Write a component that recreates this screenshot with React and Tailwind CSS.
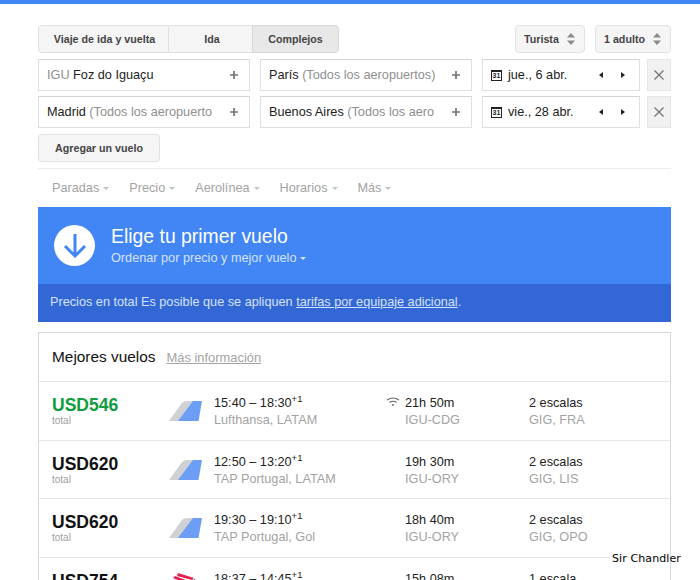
const flights = [
  { price: 'USD546', best: true, times: '15:40 – 18:30', plus: '+1', air: 'Lufthansa, LATAM', wifi: true, dur: '21h 50m', route: 'IGU-CDG', stops: '2 escalas', via: 'GIG, FRA' },
  { price: 'USD620', times: '12:50 – 13:20', plus: '+1', air: 'TAP Portugal, LATAM', dur: '19h 30m', route: 'IGU-ORY', stops: '2 escalas', via: 'GIG, LIS' },
  { price: 'USD620', times: '19:30 – 19:10', plus: '+1', air: 'TAP Portugal, Gol', dur: '18h 40m', route: 'IGU-ORY', stops: '2 escalas', via: 'GIG, OPO' },
  { price: 'USD754', times: '18:37 – 14:45', plus: '+1', air: 'LATAM', dur: '15h 08m', route: 'IGU-CDG', stops: '1 escala', via: 'GRU', latam: true },
];

const TailIcon = () => (
  <svg width="33" height="20" viewBox="0 0 33 20">
    <path d="M0 20 L13 2 Q15 0 18 0 L24 0 L13 20 Z" fill="#cfd1d4" />
    <path d="M9 20 L24 0 L33 0 L29.5 20 Z" fill="#6d9ef5" />
  </svg>
);

const LatamIcon = () => (
  <svg width="23" height="14" viewBox="0 0 23 14" className="ml-[4px] -mt-[4px]">
    <path d="M5 0 L21 5 L19 7 L4 3 Z" fill="#e8214f" />
    <path d="M0 5 L2 3 L18 9 L16 12 Z" fill="#e8214f" />
    <path d="M12 12 L22 6 L22 14 L12 14 Z" fill="#2a1f7e" />
  </svg>
);

const Wifi = () => (
  <svg width="14" height="10" viewBox="0 0 14 10" fill="none" stroke="#666" strokeWidth="1.1">
    <path d="M1 3 Q7 -1 13 3" />
    <path d="M3.5 5.5 Q7 3 10.5 5.5" />
    <circle cx="7" cy="8" r="0.9" fill="#666" stroke="none" />
  </svg>
);

const Caret = ({ color = 'border-t-[#c4c4c4]' }) => (
  <span className={`inline-block w-0 h-0 border-x-[3px] border-x-transparent border-t-[3px] ml-[4px] align-middle ${color}`} />
);

const Plus = () => (
  <svg width="8" height="8" viewBox="0 0 8 8" className="shrink-0">
    <path d="M4 0 V8 M0 4 H8" stroke="#757575" strokeWidth="1.7" />
  </svg>
);

const Updown = () => (
  <svg width="8" height="12" viewBox="0 0 8 12" fill="#8a8a8a">
    <path d="M4 0 L8 4.5 H0 Z" />
    <path d="M4 12 L8 7.5 H0 Z" />
  </svg>
);

const Select = ({ label, width }) => (
  <div className={`${width} h-[28px] flex items-center justify-between pl-[8px] pr-[9px] bg-[#f5f5f5] border border-[#e2e2e2] rounded-sm text-[10.7px] font-bold text-[#444]`}>
    {label}
    <Updown />
  </div>
);

const Field = ({ children, width }) => (
  <div className={`${width} h-[32px] flex items-center justify-between pl-[8px] pr-[11px] bg-white border border-[#e0e0e0] border-t-[#d4d4d4] text-[12.7px] text-[#222]`}>
    <span className="whitespace-nowrap overflow-hidden w-[170px] pt-[1px]">{children}</span>
    <Plus />
  </div>
);

const DateField = ({ label }) => (
  <div className="w-[158px] h-[32px] flex items-center pl-[8px] bg-white border border-[#e0e0e0] border-t-[#d4d4d4] text-[12.7px] text-[#222]">
    <span className="w-[11px] h-[11px] border border-[#222] border-t-2 text-[7px] leading-[8px] font-bold text-center mr-[6px] shrink-0">31</span>
    <span className="w-[91px] whitespace-nowrap pt-[1px]">{label}</span>
    <span className="w-0 h-0 border-y-[3.5px] border-y-transparent border-r-[4px] border-r-[#222]" />
    <span className="w-0 h-0 border-y-[3.5px] border-y-transparent border-l-[4px] border-l-[#222] ml-[18px]" />
  </div>
);

const CloseBox = () => (
  <div className="w-[24px] h-[32px] flex items-center justify-center bg-[#f1f1f1] border border-[#e6e6e6]">
    <svg width="10" height="10" viewBox="0 0 10 10">
      <path d="M0.5 0.5 L9.5 9.5 M9.5 0.5 L0.5 9.5" stroke="#757575" strokeWidth="1.3" />
    </svg>
  </div>
);

const Gray = ({ children }) => <span className="text-[#8f8f8f]">{children}</span>;

const FlightRow = ({ f }) => (
  <div className="h-[58.5px] flex pt-[13px] border-t border-[#e8e8e8] text-[12.7px] leading-[17px] text-[#222]">
    <div className="w-[130px] pl-[13px]">
      <div className={`text-[17.5px] leading-[20px] font-bold ${f.best ? 'text-[#109d3e]' : 'text-[#111]'}`}>{f.price}</div>
      <div className="text-[10px] leading-[11px] text-[#9e9e9e]">total</div>
    </div>
    <div className="w-[45px] pt-[6px]">{f.latam ? <LatamIcon /> : <TailIcon />}</div>
    <div className="w-[191px]">
      <div className="whitespace-nowrap">
        {f.times}
        <sup className="text-[9.5px] leading-[0]">{f.plus}</sup>
      </div>
      <div className="text-[#a3a3a3]">{f.air}</div>
    </div>
    <div className="w-[124px] relative">
      {f.wifi && (
        <span className="absolute left-[-19px] top-[2px]">
          <Wifi />
        </span>
      )}
      <div>{f.dur}</div>
      <div className="text-[#a3a3a3]">{f.route}</div>
    </div>
    <div>
      <div>{f.stops}</div>
      <div className="text-[#a3a3a3]">{f.via}</div>
    </div>
  </div>
);

const App = () => {
  return (
    <div className="relative w-[700px] h-[580px] overflow-hidden bg-white font-['Liberation_Sans',Arial,sans-serif]">
      <div className="h-[4px] bg-[#4285f4]" />
      <div className="mx-[38px] w-[633px] pt-[21px]">
        <div className="flex justify-between">
          <div className="flex text-[10.7px] font-bold text-[#444] h-[28px]">
            <div className="w-[131px] flex items-center justify-center pl-[2px] bg-[#f5f5f5] border border-[#e0e0e0] rounded-l-sm">Viaje de ida y vuelta</div>
            <div className="w-[83px] flex items-center justify-center pl-[3px] bg-[#f5f5f5] border-y border-[#e0e0e0]">Ida</div>
            <div className="w-[87px] flex items-center justify-center bg-[#e8e8e8] border border-[#d8d8d8] rounded-r-sm">Complejos</div>
          </div>
          <div className="flex gap-[10px]">
            <Select label="Turista" width="w-[70px]" />
            <Select label="1 adulto" width="w-[76px]" />
          </div>
        </div>

        <div className="flex gap-[10px] mt-[6px]">
          <Field width="w-[212px]"><Gray>IGU</Gray> Foz do Iguaçu</Field>
          <Field width="w-[212px]">París <Gray>(Todos los aeropuertos)</Gray></Field>
          <div className="flex gap-[7px]">
            <DateField label="jue., 6 abr." />
            <CloseBox />
          </div>
        </div>
        <div className="flex gap-[10px] mt-[5px]">
          <Field width="w-[212px]">Madrid <Gray>(Todos los aeropuerto</Gray></Field>
          <Field width="w-[212px]">Buenos Aires <Gray>(Todos los aero</Gray></Field>
          <div className="flex gap-[7px]">
            <DateField label="vie., 28 abr." />
            <CloseBox />
          </div>
        </div>

        <div className="w-[122px] h-[28px] mt-[6px] flex items-center justify-center bg-[#f5f5f5] border border-[#e0e0e0] rounded-sm text-[10.7px] font-bold text-[#444]">
          Agregar un vuelo
        </div>

        <div className="mt-[6px] border-t border-[#ececec] h-[39px] flex items-center gap-[20px] pl-[14px] pt-[1px] text-[12.7px] text-[#a3a3a3]">
          <span>Paradas<Caret /></span>
          <span>Precio<Caret /></span>
          <span>Aerolínea<Caret /></span>
          <span>Horarios<Caret /></span>
          <span>Más<Caret /></span>
        </div>

        <div className="bg-[#4285f4] text-white">
          <div className="h-[77px] flex items-center pl-[16px] gap-[16px]">
            <div className="w-[41px] h-[41px] rounded-full bg-white flex items-center justify-center">
              <svg width="24" height="26" viewBox="0 0 24 26" fill="none" stroke="#4285f4" strokeWidth="3">
                <path d="M12 1 V23 M2 13 L12 23 L22 13" />
              </svg>
            </div>
            <div>
              <div className="text-[19.4px] leading-[24px]">Elige tu primer vuelo</div>
              <div className="text-[12.7px] leading-[17px] mt-[2px] text-[#d5e3fb]">
                Ordenar por precio y mejor vuelo<Caret color="border-t-[#d5e3fb]" />
              </div>
            </div>
          </div>
          <div className="h-[38px] flex items-center pl-[12px] bg-[#3367d6] text-[12.7px] text-[#d5e3fb]">
            <span>Precios en total Es posible que se apliquen <span className="underline">tarifas por equipaje adicional</span>.</span>
          </div>
        </div>

        <div className="mt-[10px] border border-[#d8d8d8]">
          <div className="h-[48px] flex items-center pl-[13px] gap-[11px]">
            <span className="text-[15.4px] text-[#111]">Mejores vuelos</span>
            <span className="text-[12.9px] pt-[1px] text-[#a3a3a3] underline">Más información</span>
          </div>
          {flights.map((f) => (
            <FlightRow key={f.price + f.times} f={f} />
          ))}
        </div>
      </div>

      <div className="absolute left-[612px] top-[552px] text-[11px] leading-[14px] tracking-[0.1px] font-['DejaVu_Sans',sans-serif] text-black [text-shadow:0_0_2px_#fff]">Sir Chandler</div>
    </div>
  );
};

export default App;
